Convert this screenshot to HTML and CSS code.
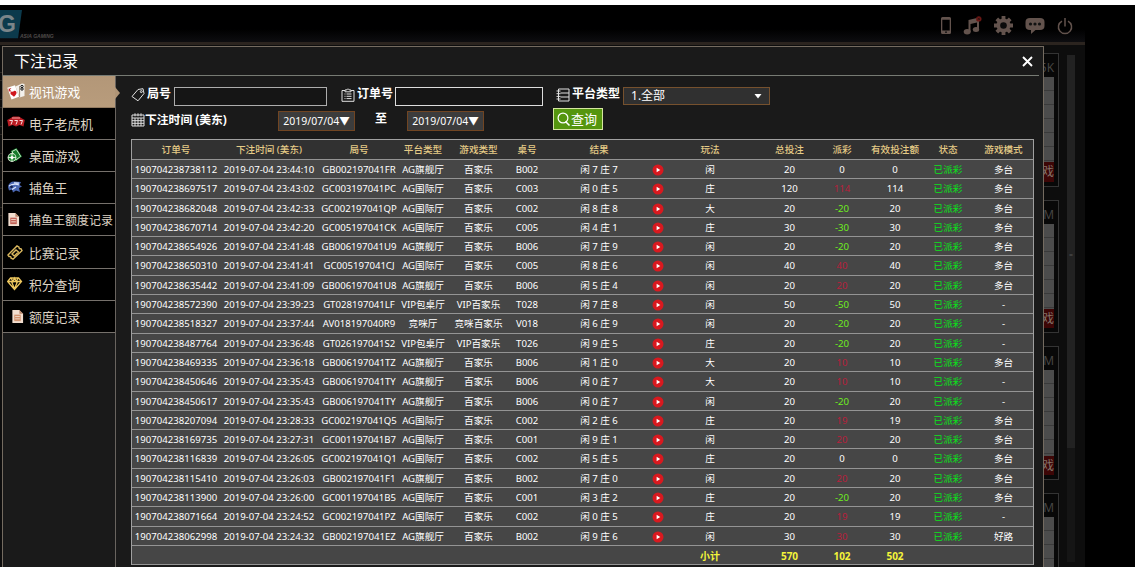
FILE: index.html
```html
<!DOCTYPE html>
<html lang="zh-CN">
<head>
<meta charset="utf-8">
<title>下注记录</title>
<link rel="stylesheet" href="styles.css">
</head>
<body>
<svg class="defs" width="0" height="0">
  <symbol id="play" viewBox="0 0 12 12"><circle cx="6" cy="6" r="5.5" fill="#d8191f"/><path d="M4.6 3.7 8.3 6 4.6 8.3z" fill="#fff"/></symbol>
  <symbol id="doc" viewBox="0 0 14 16"><path d="M1.500 1h7.500l4 4v10h-11.500z" fill="#f2ded0"/><path d="M9 1v4h4z" fill="#b98568"/><path d="M3.500 6h7v7h-7z" fill="currentColor"/><path d="M4.500 8h5M4.500 10.500h5" stroke="#f2ded0" stroke-width=".9"/></symbol>
</svg>
<div class="lobby">
  <header class="topbar">
    <div class="brand"><span class="logo">G</span><span class="brand-name">ASIA GAMING</span></div>
    <nav class="tools">
      <svg width="10" height="17" viewBox="0 0 10 17"><path fill-rule="evenodd" d="M1.500 0h7q1.500 0 1.500 1.500v14q0 1.500-1.500 1.500h-7q-1.500 0-1.500-1.500v-14q0-1.500 1.500-1.500zM1.300 2.800h7.400v10.600H1.300z"/><circle cx="5" cy="15.200" r=".9" fill="#111"/></svg>
      <svg width="19" height="19" viewBox="0 0 19 19"><path d="M5.500 4 16 1.500v12h-2V6.500l-6.500 1.600V16h-2z"/><ellipse cx="4.200" cy="15.700" rx="3.500" ry="2.700"/><ellipse cx="13" cy="13.400" rx="3.200" ry="2.500"/><circle cx="15.800" cy="2.900" r="2.700" fill="#6d1714"/><path d="M14.500 1.600 17.100 4.200M17.100 1.600 14.500 4.200" stroke="#26100f" stroke-width=".8"/></svg>
      <svg width="19" height="19" viewBox="0 0 19 19"><g stroke="#63534d" stroke-width="3.800"><path d="M9.500 0v19M0 9.500h19M2.800 2.800l13.400 13.400M16.200 2.800 2.800 16.200"/></g><circle cx="9.500" cy="9.500" r="7"/><circle cx="9.500" cy="9.500" r="3.300" fill="#0b0b0b"/></svg>
      <svg width="20" height="18" viewBox="0 0 20 18"><path d="M5 1h10q4.500 0 4.500 4v4q0 4-4.500 4h-4.500l-4.500 4v-4H5Q.5 13 .5 9V5q0-4 4.500-4z"/><g fill="#111"><circle cx="5.500" cy="7" r="1.600"/><circle cx="10" cy="7" r="1.600"/><circle cx="14.500" cy="7" r="1.600"/></g></svg>
      <svg width="16" height="18" viewBox="0 0 16 18"><path d="M5 4.100a6.600 6.600 0 1 0 6 0M8 1v8.500" fill="none" stroke="#63534d" stroke-width="1.500"/></svg>
    </nav>
  </header>
  <div class="lobby-body">
    <div class="edge"><i></i><i></i><i></i><i></i><i></i><i></i></div>
    <div class="tables">
      <section class="card"><b>5K</b><div class="road"></div><div class="enter">戏</div></section>
      <section class="card"><b>M</b><div class="road"></div><div class="enter">戏</div></section>
      <section class="card"><b>M</b><div class="road"></div><div class="enter">戏</div></section>
      <section class="card last"><b>M</b><div class="road"></div></section>
    </div>
    <div class="scroll"><div class="thumb"><span>=</span></div></div>
  </div>
</div>

<main class="dialog">
  <div class="title"><h1>下注记录</h1><svg class="close" width="11" height="11" viewBox="0 0 11 11"><path d="M1 1l9 9M10 1 1 10" stroke="#fff" stroke-width="1.900"/></svg></div>
  <div class="content">
    <aside class="menu">
      <a class="item active"><svg width="18" height="17" viewBox="0 0 18 17"><path d="M8.500 3.500 15 .5l2.500.5v12l-5 1.500z" fill="#f4f1ec"/><path d="M.3 4.800 8 2.200l4 11.500-7.500 2.800z" fill="#fff"/><path d="M12.600 3v11" stroke="#8a7359" stroke-width=".8"/><path d="M2.200 5.500v3M2.200 7l1.600-1.700M2.200 7l1.800 1.300" stroke="#c4161c" stroke-width="1"/><path d="M7 13.800 3.500 11Q3 7.800 6 8.800q2-2 3.300 0 1 2-2.300 5z" fill="#d0161c"/><circle cx="15" cy="3.500" r="1.200" fill="none" stroke="#111"/><circle cx="15" cy="6" r="1.200" fill="none" stroke="#111"/></svg><span>视讯游戏</span><i class="tip"></i></a>
      <a class="item"><svg width="18" height="17" viewBox="0 0 18 17"><path d="M3 3.500 6 1.500h6l3 2 2.800 1.500-1.300 6.500-4-1.500-3.500 1.500-3.500-1.500-4 1.500L.2 5z" fill="#ba1c23"/><path d="M2.500 5.500h3l-1.500 4M7.500 5.500h3l-1.500 4M12.500 5.500h3l-1.500 4" fill="none" stroke="#f7dcdc" stroke-width="1"/><path d="M5 3h8" stroke="#e9a0a0"/></svg><span>电子老虎机</span></a>
      <a class="item"><svg width="18" height="17" viewBox="0 0 18 17"><path d="M3.500 4 9.500 1l5.500 8.500-6.500 5z" fill="#147929"/><path d="M5 4.500 9.200 2.300l4.500 7-4.500 3.500z" fill="none" stroke="#d9eed7" stroke-width=".9"/><circle cx="5" cy="10.500" r="4.400" fill="#d8ead4"/><circle cx="5" cy="10.500" r="3.400" fill="#218a35"/><path d="M1 10.500h8M5 6.500v8" stroke="#d8ead4" stroke-width="1"/><circle cx="5" cy="10.500" r="1.600" fill="#fff"/></svg><span>桌面游戏</span></a>
      <a class="item"><svg width="18" height="17" viewBox="0 0 18 17"><path d="M1 8q1-6 7-5.500l6 .5-1.500 3 2.500 1.500-3 1.500 1 4-4-1.500-3 2-1-3-3 1z" fill="#4a67b2"/><path d="M2 7q5-3 10-1M5 10.500l4-2.500M7 3.800l5 .4" fill="none" stroke="#dce5fb" stroke-width="1.300"/><circle cx="4.500" cy="7.800" r="1.400" fill="#12204e"/></svg><span>捕鱼王</span></a>
      <a class="item long"><svg width="13" height="15" class="sheet red"><use href="#doc"/></svg><span>捕鱼王额度记录</span></a>
      <a class="item"><svg width="18" height="17" viewBox="0 0 18 17"><g fill="none" stroke="#dcb95f" stroke-width="1.400"><path d="M1 11 10 2l2 1.200q0 2 2 1.500l1 2-9 8.500-2-1q.3-2-2-1.700z"/><path d="M5 10l4-4 2.500 2-4.200 4z"/></g></svg><span>比赛记录</span></a>
      <a class="item"><svg width="18" height="17" viewBox="0 0 18 17"><g fill="none" stroke="#edc75e" stroke-width="1.300"><path d="M3.500 2h8l3 3.500-7 8-6.800-8zM.8 5.500h13.600M4.500 5.500l3 7.500 3-7.500M4 2l2 3.500L7.500 2 9.300 5.500 11 2"/></g></svg><span>积分查询</span></a>
      <a class="item"><svg width="13" height="15" class="sheet inset"><use href="#doc"/></svg><span>额度记录</span></a>
    </aside>
    <section class="panel">
      <form class="filters">
        <div class="field round"><svg width="14" height="14" viewBox="0 0 14 14"><g class="line"><path d="M1 8.500 7 1.500l5-.8L13 5.500 7 12.800z"/><circle cx="10.300" cy="3.600" r="1"/></g></svg><label>局号</label><input type="text"></div>
        <div class="field order"><svg width="14" height="14" viewBox="0 0 14 14"><g class="line"><path d="M4 2.500H1v10.800h12V2.500h-3M4 3.800V2l2-.2Q7-.3 8 1.800l2 .2v1.800zM3.500 6h1M5.500 6h5M3.500 8.300h1M5.500 8.300h5M3.500 10.600h1M5.500 10.600h5"/></g></svg><label>订单号</label><input type="text"></div>
        <div class="field platform"><svg width="14" height="14" viewBox="0 0 14 14"><g class="line"><path d="M2.500 1h10.500v12H2.500zM.5 3h4M.5 5.700h4M.5 8.400h4M.5 11h4M4.500 5h8.500M4.500 9h8.500"/></g></svg><label>平台类型</label><div class="select"><span>1.全部</span><svg width="8" height="5"><path d="M.5 0h7L4 4.500z" fill="#fff"/></svg></div></div>
        <div class="field when"><svg width="14" height="14" viewBox="0 0 14 14"><g class="line"><path d="M1 2h12v11H1zM1 5h12M1 7.700h12M1 10.300h12M4 5v8M7 5v8M10 5v8M4 .3v3M7 .3v3M10 .3v3"/></g></svg><label>下注时间 (美东)</label></div>
        <div class="range"><span class="date">2019/07/04▼</span><b>至</b><span class="date">2019/07/04▼</span></div>
        <div class="search"><svg width="14" height="15" viewBox="0 0 14 15"><circle cx="6" cy="6" r="4.900" fill="none" stroke="#fff" stroke-width="1.200"/><path d="M8.500 9.500 12.500 13.500" stroke="#fff" stroke-width="1.600"/></svg><span>查询</span></div>
      </form>
      <div class="records" id="records">
        <div class="row head"><span>订单号</span><span>下注时间 (美东)</span><span>局号</span><span>平台类型</span><span>游戏类型</span><span>桌号</span><span>结果</span><span></span><span>玩法</span><span>总投注</span><span>派彩</span><span>有效投注额</span><span>状态</span><span>游戏模式</span></div>
      </div>
    </section>
  </div>
</main>
<script src="records.js"></script>
</body>
</html>
```
FILE: styles.css
```css
* { box-sizing: border-box; }
html { background: #000; }
body { margin: 0; height: 567px; overflow: hidden; position: relative; background: #000; border-top: 5px solid #fff; font-family: "Noto Sans", "Noto Sans CJK SC", sans-serif; color: #fff; }
.defs { position: absolute; }

.lobby { width: 1085px; height: 562px; background: #0d0d0d; }
.topbar { height: 40px; display: flex; justify-content: space-between; background: linear-gradient(#000 65%, #0d0d10); border-bottom: 3px solid #2b241f; }
.brand { display: flex; align-items: flex-start; }
.logo { width: 22px; height: 32px; margin-top: 5px; background: #0c3a4c; clip-path: polygon(0 0, 100% 0, 82% 88%, 0 88%); color: #7b8589; font: bold 23px/28px "Liberation Sans", sans-serif; text-indent: -2px; }
.brand-name { margin: 27px 0 0 -2px; font: italic bold 5px/8px "Liberation Sans", sans-serif; color: #514c4a; }
.tools { display: flex; align-items: center; padding: 4px 12px 0 0; fill: #63534d; }
.tools svg { margin-left: 12px; }
.lobby-body { display: flex; height: 522px; justify-content: space-between; }
.edge { display: flex; flex-direction: column; width: 3px; padding-top: 27px; gap: 18px; }
.edge i { height: 9px; border: solid #2c2824; border-width: 1px 1px 1px 0; }
.tables { margin-left: auto; display: flex; flex-direction: column; gap: 13px; padding-top: 8px; }
.card { flex: none; width: 40px; height: 133.700px; padding: 4px 4px 4px 0; border: 1px solid #343434; background: #080808; display: flex; flex-direction: column; }
.card.last { flex: 1; min-height: 0; padding-bottom: 0; border-bottom: 0; }
.card b { height: 19px; text-align: right; font: 12px/20px "Open Sans", sans-serif; color: #4a4846; }
.road { height: 88px; background: repeating-linear-gradient(#4c4c4c 0 13px, #3a3a3a 13px 14px); }
.last .road { height: auto; flex: 1; }
.enter { height: 20px; background: #3d0606; color: #827166; font-size: 12px; line-height: 19px; text-align: right; }
.scroll { width: 8px; margin: 10px 10px 0 8px; height: 507px; background: #151515; }
.thumb { height: 393px; background: #222; color: #555; font-size: 7px; text-align: center; padding-top: 195px; }

.dialog { position: absolute; left: 2px; top: 41px; width: 1042px; height: 521px; border: 1px solid #746b60; border-bottom: 0; background: #1a1a1a; }
.title { height: 29px; margin-right: 4px; padding: 0 6px 0 11px; display: flex; justify-content: space-between; align-items: center; border-bottom: 1px solid #777b74; }
.title h1 { margin: 0; font-size: 16px; line-height: 28px; font-weight: 400; }
.content { display: flex; height: 491px; overflow: hidden; }
.menu { width: 113px; border-right: 1px solid #69645f; }
.item { height: 32.100px; display: flex; align-items: center; padding: 0 0 0 4px; background: #000; border-bottom: 1px solid #76716c; color: #ded3c4; font-size: 12.800px; white-space: nowrap; }
.item svg { flex: none; margin-right: 4px; }
.item.active { position: relative; color: #fff; background: linear-gradient(#b39778, #b89c7c); border-bottom-color: #927a60; }
.tip { position: absolute; left: 112px; top: 11px; border: solid transparent; border-width: 6px 0 6px 5px; border-left-color: #b09576; }
.item.long { font-size: 12px; }
.item .sheet { margin: 0 9px 0 0; color: #d29370; }
.item .sheet.red { color: #c26157; }
.item .inset { margin: 0 5px 0 4px; }

.panel { width: 903px; margin-left: 15px; }
.filters { display: grid; grid-template-columns: 210px 212px auto; grid-template-rows: 22px 24px; row-gap: 1px; padding-top: 9px; height: 63px; }
.field { display: flex; align-items: flex-start; }
.field > svg { margin-top: 3px; flex: none; }
.line { fill: none; stroke: #e0e0e0; stroke-width: 1; }
.field label { margin-left: 2px; font-weight: 700; font-size: 12px; line-height: 18px; white-space: nowrap; }
.field input { margin: 2px 0 0 3px; height: 19px; border: 1px solid #adadad; background: #151515; padding: 0; }
.round input { width: 153px; }
.order input { width: 148px; border-color: #ddd; margin-left: 2px; }
.platform { padding-left: 3px; }
.select { display: flex; justify-content: space-between; align-items: center; width: 147px; height: 18px; margin: 2px 0 0 3px; padding: 0 7px; border: 1px solid #76512e; background: #303030; font-size: 12px; line-height: 16px; }
.when > svg { margin-top: 5px; }
.when label { margin-left: 0; line-height: 22px; font-size: 11.800px; }
.range { display: flex; margin-left: -63px; width: 206px; justify-content: space-between; }
.date { width: 77px; height: 20px; margin-top: 3px; border: 1px solid #714522; background: #3c3c3c; font-size: 10.500px; line-height: 19px; text-align: center; white-space: nowrap; }
.range b { font-size: 12px; line-height: 22px; }
.search { width: 50px; height: 22px; margin-left: 0; padding-left: 3px; display: flex; align-items: center; background: #55960f; border: 1px solid #d6e6a1; font-size: 13px; line-height: 20px; }

.records { border: solid #a0a0a0; border-width: 1px 1px 0; background: #464646; font-size: 9.600px; }
.row { display: grid; grid-template-columns: 88px 98px 82px 46px 65px 32px 112px 6px 98px 61px 44px 62px 44px 63px; height: 19.310px; border-bottom: 1px solid #949494; }
.row > * { display: flex; justify-content: center; align-items: center; white-space: nowrap; min-width: 0; line-height: 18px; padding-top: 1px; }
.row > :last-child { padding-left: 4px; }
.row svg { flex: none; }
.head { height: 20px; background: #313131; color: #e5cb86; font-weight: 500; }
.win { color: #b81f3c; }
.lose { color: #6ef01e; }
.paid { color: #08e41a; }
.total { color: #f4f43a; font-weight: 700; font-size: 10px; }
```
FILE: records.js
```js
// order | time | round | hall | game | table | player | banker | play | bet | payout | valid | mode
const records = `
190704238738112|23:44:10|GB002197041FR|AG旗舰厅|百家乐|B002|7|7|闲|20|0|0|多台
190704238697517|23:43:02|GC003197041PC|AG国际厅|百家乐|C003|0|5|庄|120|114|114|多台
190704238682048|23:42:33|GC002197041QP|AG国际厅|百家乐|C002|8|8|大|20|-20|20|多台
190704238670714|23:42:20|GC005197041CK|AG国际厅|百家乐|C005|4|1|庄|30|-30|30|多台
190704238654926|23:41:48|GB006197041U9|AG旗舰厅|百家乐|B006|7|9|闲|20|-20|20|多台
190704238650310|23:41:41|GC005197041CJ|AG国际厅|百家乐|C005|8|6|闲|40|40|40|多台
190704238635442|23:41:09|GB006197041U8|AG旗舰厅|百家乐|B006|5|4|闲|20|20|20|多台
190704238572390|23:39:23|GT028197041LF|VIP包桌厅|VIP百家乐|T028|7|8|闲|50|-50|50|-
190704238518327|23:37:44|AV018197040R9|竞咪厅|竞咪百家乐|V018|6|9|闲|20|-20|20|-
190704238487764|23:36:48|GT026197041S2|VIP包桌厅|VIP百家乐|T026|9|5|庄|20|-20|20|-
190704238469335|23:36:18|GB006197041TZ|AG旗舰厅|百家乐|B006|1|0|大|20|10|10|多台
190704238450646|23:35:43|GB006197041TY|AG旗舰厅|百家乐|B006|0|7|大|20|10|10|-
190704238450617|23:35:43|GB006197041TY|AG旗舰厅|百家乐|B006|0|7|闲|20|-20|20|-
190704238207094|23:28:33|GC002197041Q5|AG国际厅|百家乐|C002|2|6|庄|20|19|19|多台
190704238169735|23:27:31|GC001197041B7|AG国际厅|百家乐|C001|9|1|闲|20|20|20|多台
190704238116839|23:26:05|GC002197041Q1|AG国际厅|百家乐|C002|5|5|庄|20|0|0|多台
190704238115410|23:26:03|GB002197041F1|AG旗舰厅|百家乐|B002|7|0|闲|20|20|20|多台
190704238113900|23:26:00|GC001197041B5|AG国际厅|百家乐|C001|3|2|庄|20|-20|20|多台
190704238071664|23:24:52|GC002197041PZ|AG国际厅|百家乐|C002|0|5|庄|20|19|19|-
190704238062998|23:24:32|GB002197041EZ|AG旗舰厅|百家乐|B002|9|6|闲|30|30|30|好路`.trim().split("\n");

const cell = (text, cls = "") => `<span class="${cls}">${text}</span>`;
const rows = records.map((line) => {
  const [order, time, round, hall, game, table, player, banker, play, bet, payout, valid, mode] = line.split("|");
  const tone = Number(payout) > 0 ? "win" : Number(payout) < 0 ? "lose" : "";
  return `<div class="row">${cell(order)}${cell("2019-07-04 " + time)}${cell(round)}${cell(hall)}${cell(game)}${cell(table)}${cell(`闲 ${player} 庄 ${banker}`)}<span><svg width="12" height="12"><use href="#play"/></svg></span>${cell(play)}${cell(bet)}${cell(payout, tone)}${cell(valid)}${cell("已派彩", "paid")}${cell(mode)}</div>`;
});
const blank = cell("").repeat(8);
rows.push(`<div class="row total">${blank}${cell("小计")}${cell("570")}${cell("102")}${cell("502")}${cell("")}${cell("")}</div>`);
document.getElementById("records").insertAdjacentHTML("beforeend", rows.join(""));
```
